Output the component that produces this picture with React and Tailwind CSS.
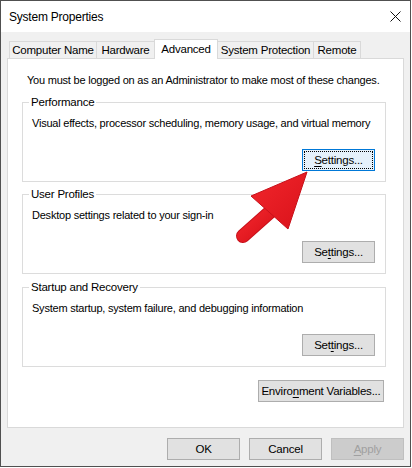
import React from "react";

const font = "font-['Liberation_Sans','Noto_Sans',sans-serif] tracking-[-0.22px] whitespace-nowrap";

function Btn({ children, className = "", focused = false, disabled = false }) {
  let look = "border-[#adadad] bg-[#e1e1e1] text-black";
  if (focused) look = "border-[#0078d7] bg-[#e5f1fb] text-black";
  if (disabled) look = "border-[#bfbfbf] bg-[#cccccc] text-[#a0a0a0]";
  return (
    <div
      className={
        "relative flex items-center justify-center h-[22px] border text-[11.5px] leading-[16px] " +
        look +
        " " +
        className
      }
    >
      {focused && (
        <span className="absolute inset-[1px] border border-dotted border-black" />
      )}
      <span className="relative">{children}</span>
    </div>
  );
}

function U({ children }) {
  return <span className="underline underline-offset-2 decoration-1">{children}</span>;
}

function Group({ label, desc, button, className = "" }) {
  return (
    <div
      className={
        "relative ml-[14px] w-[364px] h-[80px] border border-[#dcdcdc] flex flex-col pt-[12px] pl-[9px] pr-[10px] pb-[10px] " +
        className
      }
    >
      <span className="absolute left-[6px] top-[-9px] bg-white px-[2px] text-[11.5px] leading-[16px]">
        {label}
      </span>
      <div className="text-[11px] leading-[16px]">{desc}</div>
      <div className="mt-auto flex justify-end">{button}</div>
    </div>
  );
}

function Tab({ children, selected = false, className = "" }) {
  return (
    <div
      className={
        (selected
          ? "relative z-10 h-[20px] mb-[-1px] bg-white pb-[2px] "
          : "h-[17px] bg-[#f0f0f0] ") +
        "flex items-center justify-center border border-b-0 border-[#d9d9d9] text-[11.5px] leading-[16px] " +
        className
      }
    >
      {children}
    </div>
  );
}

export default function App() {
  return (
    <div className={"relative w-[411px] h-[467px] border border-[#505050] bg-[#f0f0f0] text-black " + font}>
      {/* Title bar */}
      <div className="h-[31px] bg-white flex items-center justify-between pl-[8px] pr-[9px]">
        <span className="text-[12px] leading-[16px]">System Properties</span>
        <svg width="11" height="11" viewBox="0 0 11 11">
          <path d="M0.5 0.5 L10.5 10.5 M10.5 0.5 L0.5 10.5" stroke="#111" strokeWidth="1" fill="none" />
        </svg>
      </div>

      {/* Body */}
      <div className="px-[6px] pt-[7px]">
        {/* Tabs */}
        <div className="flex items-end h-[19px] pl-[2px]">
          <Tab className="w-[88px]">Computer Name</Tab>
          <Tab className="w-[59px] -ml-px">Hardware</Tab>
          <Tab selected className="w-[64px] -ml-px">Advanced</Tab>
          <Tab className="w-[97px] -ml-px">System Protection</Tab>
          <Tab className="w-[48px] -ml-px">Remote</Tab>
        </div>

        {/* Panel */}
        <div className="h-[370px] bg-white border border-[#d9d9d9] flex flex-col">
          <div className="pt-[13px] pl-[19px] text-[11px] leading-[16px]">
            You must be logged on as an Administrator to make most of these changes.
          </div>

          <Group
            className="mt-[14px]"
            label="Performance"
            desc="Visual effects, processor scheduling, memory usage, and virtual memory"
            button={
              <Btn focused className="w-[73px]">
                <U>S</U>ettings...
              </Btn>
            }
          />
          <Group
            className="mt-[12px]"
            label="User Profiles"
            desc="Desktop settings related to your sign-in"
            button={
              <Btn className="w-[73px]">
                Se<U>t</U>tings...
              </Btn>
            }
          />
          <Group
            className="mt-[13px]"
            label="Startup and Recovery"
            desc="System startup, system failure, and debugging information"
            button={
              <Btn className="w-[73px]">
                Set<U>t</U>ings...
              </Btn>
            }
          />

          <div className="mt-[13px] flex justify-end pr-[19px]">
            <Btn className="w-[126px]">
              Enviro<U>n</U>ment Variables...
            </Btn>
          </div>
        </div>

        {/* Bottom buttons */}
        <div className="mt-[10px] flex justify-end gap-[9px]">
          <Btn className="w-[73px]">OK</Btn>
          <Btn className="w-[73px]">Cancel</Btn>
          <Btn disabled className="w-[73px]">
            <U>A</U>pply
          </Btn>
        </div>
      </div>

      {/* Red arrow overlay */}
      <svg
        className="absolute left-[-1px] top-[-1px] pointer-events-none"
        width="412"
        height="468"
        viewBox="0 0 412 468"
      >
        <defs>
          <linearGradient id="ar" x1="0" y1="0" x2="1" y2="1">
            <stop offset="0" stopColor="#f2262c" />
            <stop offset="1" stopColor="#d9121a" />
          </linearGradient>
        </defs>
        <line x1="270" y1="212" x2="243" y2="236" stroke="#c8101a" strokeWidth="14" strokeLinecap="round" />
        <line x1="270" y1="212" x2="243" y2="236" stroke="url(#ar)" strokeWidth="12" strokeLinecap="round" />
        <polygon points="307,172 251,196 288,229" fill="url(#ar)" stroke="#c8101a" strokeWidth="1" strokeLinejoin="round" />
      </svg>
    </div>
  );
}
